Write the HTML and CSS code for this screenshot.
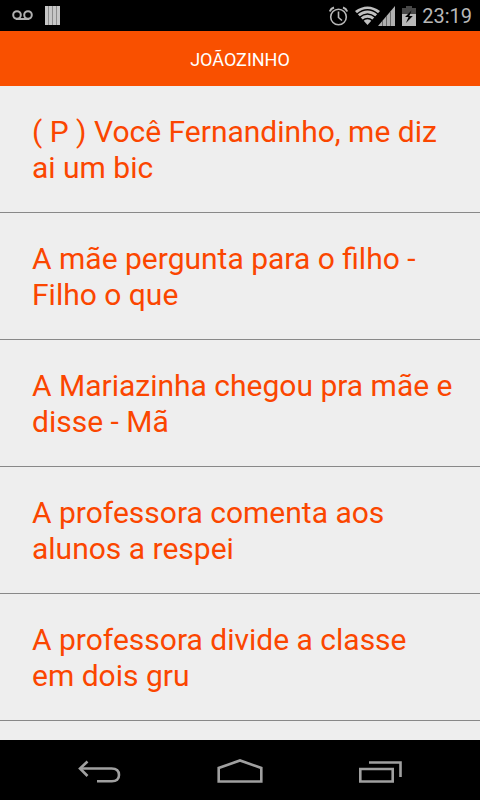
FILE: index.html
```html
<!DOCTYPE html>
<html lang="pt-BR">

<head>
  <meta charset="UTF-8">
  <meta name="viewport" content="width=device-width, initial-scale=1.0">
  <title>Joãozinho</title>
  <link rel="stylesheet" href="styles.css">
</head>

<body>
  <div class="status-bar">
    <div class="status-icons notifications">
      <svg width="21" height="12" viewBox="0 0 21 12" fill="none" stroke="#b0b0b0" stroke-width="2">
        <circle cx="5" cy="5" r="3.8" />
        <circle cx="16" cy="5" r="3.8" />
        <path d="M4 9h13" />
      </svg>
      <svg width="15" height="20" viewBox="0 0 15 20">
        <path fill="#8c8c8c" d="M0 0h15v19H0z" />
        <path fill="#c6c6c6" d="M0 0h3v19H0zM4 0h3v19H4zM8 0h3v19H8zM12 0h3v19h-3z" />
      </svg>
    </div>
    <div class="status-icons">
      <svg width="20" height="20" viewBox="0 0 20 20" fill="none" stroke="#b8b8b8" stroke-width="1.6">
        <circle cx="9.500" cy="11" r="7.800" />
        <path d="M9.500 5.500v6l3.500 3" />
        <path stroke-width="2" d="M.8 5.500Q1.800 2.500 5 1.500M18.200 5.500Q17.200 2.500 14 1.500" />
      </svg>
      <svg width="41" height="20" viewBox="0 0 41 20">
        <path fill="#c0c0c0" d="M0 5Q12.500-4 25 5L12.500 19z" />
        <path fill="none" stroke="#000" stroke-width="1.4" d="M2 8Q12.500-.4 23 8M4.500 11.400Q12.500 4.600 20.500 11.400M7.500 14.600Q12.500 10.200 17.500 14.600" />
        <path fill="#000" d="M20 20L41 0v-1L19 20z" />
        <path fill="#b0b0b0" d="M23 20L40 0v20z" />
        <path fill="none" stroke="#686868" d="M27.500 15v5M31.500 10v10M35.500 5v15" />
      </svg>
      <svg width="14" height="20" viewBox="0 0 14 20">
        <path fill="#484848" d="M4 0h6v2h4v6H0V2h4z" />
        <path fill="#b8b8b8" d="M0 8h14v12H0z" />
        <path fill="#000" d="M9.500 4.500L3 11h3.500L4 17l6.800-7H7.300z" />
      </svg>
      <span class="clock">23:19</span>
    </div>
  </div>

  <header class="title-bar">
    <h1>JOÃOZINHO</h1>
  </header>

  <main class="list">
    <a class="item" href="#">( P ) Você Fernandinho, me diz ai um bic</a>
    <a class="item" href="#">A mãe pergunta para o filho - Filho o que</a>
    <a class="item" href="#">A Mariazinha chegou pra mãe e disse - Mã</a>
    <a class="item" href="#">A professora comenta aos alunos a respei</a>
    <a class="item" href="#">A professora divide a classe em dois gru</a>
  </main>

  <nav class="nav-bar">
    <button type="button" class="nav-btn" aria-label="Voltar">
      <svg width="46" height="26" viewBox="0 0 46 26" fill="none" stroke="#a0a0a0" stroke-width="2.600">
        <path d="M2 9.500H33.500Q41 9.500 41 16T33.500 22.300H19" />
        <path d="M9.500 2.500L2 9.500L9.500 17" />
      </svg>
    </button>
    <button type="button" class="nav-btn" aria-label="Início">
      <svg width="46" height="26" viewBox="0 0 46 26" fill="none" stroke="#a0a0a0" stroke-width="2.600">
        <path d="M1.700 22.500V9L23 1.500L44.300 9V22.500z" />
      </svg>
    </button>
    <button type="button" class="nav-btn" aria-label="Aplicativos recentes">
      <svg width="46" height="26" viewBox="0 0 46 26" fill="none" stroke="#a0a0a0" stroke-width="2.600">
        <path d="M4.300 10h32.400v12.500H4.300z" />
        <path d="M13 3.500h31.500V18" />
      </svg>
    </button>
  </nav>
</body>

</html>
```
FILE: styles.css
```css
* {
  margin: 0;
  padding: 0;
  box-sizing: border-box;
  font-family: Roboto, sans-serif;
}

body {
  height: 100vh;
  display: flex;
  flex-direction: column;
  background: #eee;
}

.status-bar {
  display: flex;
  justify-content: space-between;
  align-items: center;
  height: 31px;
  padding: 0 8px 0 12px;
  background: #000;
}

.status-icons {
  display: flex;
  align-items: center;
  gap: 6px;
}

.notifications {
  gap: 12px;
}

.clock {
  font-size: 20px;
  line-height: 30px;
  color: #b8b8b8;
}

.title-bar {
  padding: 18px 16px 16px;
  text-align: center;
  background: #f95000;
  color: #fff;
}

.title-bar h1 {
  font-size: 18px;
  line-height: 21px;
  font-weight: 400;
}

.list {
  flex: 1;
  overflow: hidden;
}

.item {
  display: block;
  padding: 28px 24px 26px 32px;
  border-bottom: 1px solid #888;
  font-size: 30px;
  line-height: 36px;
  color: #fb4600;
  text-decoration: none;
}

.nav-bar {
  display: flex;
  justify-content: center;
  height: 60px;
  background: #000;
}

.nav-btn {
  display: flex;
  justify-content: center;
  align-items: center;
  width: 29%;
  padding-top: 4px;
  border: none;
  background: none;
  cursor: pointer;
}
```
